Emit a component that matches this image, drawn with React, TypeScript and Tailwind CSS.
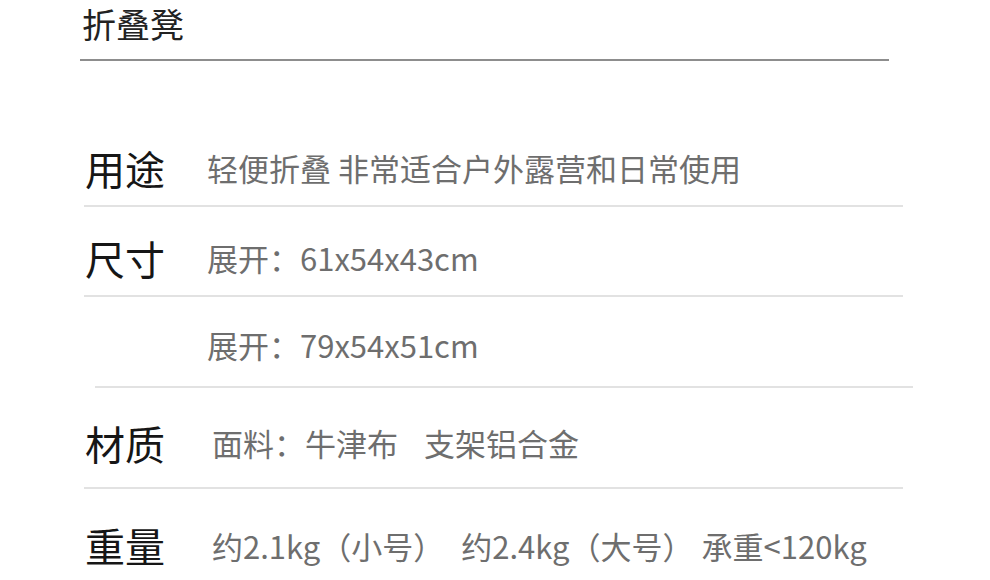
const font = "font-['Noto_Sans_CJK_SC','Noto_Sans',sans-serif]";

const Label = ({ text }: { text: string }) => (
  <span className="w-[123px] shrink-0 pl-px text-[40px] leading-none text-[#161616]">{text}</span>
);

export default function App() {
  return (
    <div className={`w-[990px] h-[580px] overflow-hidden bg-white ${font}`}>
      {/* title */}
      <div className="ml-[80px] w-[809px] h-[61px] border-b-2 border-[#8d8d8d] flex items-center pb-[11px] pl-[2px]">
        <span className="text-[34px] leading-none text-[#222]">折叠凳</span>
      </div>

      <div className="ml-[84px] w-[819px] pt-[56px]">
        {/* usage */}
        <div className="h-[90px] border-b-2 border-[#e2e2e2] flex items-center pt-[13px]">
          <Label text="用途" />
          <span className="text-[31px] leading-none text-[#6e6e6e]">轻便折叠 非常适合户外露营和日常使用</span>
        </div>

        {/* size */}
        <div className="h-[90px] border-b-2 border-[#e2e2e2] flex items-center pt-[13px]">
          <Label text="尺寸" />
          <span className="text-[31px] leading-none text-[#6e6e6e]">展开：61x54x43cm</span>
        </div>
        <div className="h-[91px] ml-[11px] -mr-[10px] border-b-2 border-[#e2e2e2] flex items-center pt-[6px]">
          <span className="w-[112px] shrink-0" />
          <span className="text-[31px] leading-none text-[#6e6e6e]">展开：79x54x51cm</span>
        </div>

        {/* material */}
        <div className="h-[101px] border-b-2 border-[#e2e2e2] flex items-center pt-[10px]">
          <Label text="材质" />
          <span className="ml-[5px] text-[31px] leading-none text-[#6e6e6e]">
            面料：牛津布<span className="ml-[26px]">支架铝合金</span>
          </span>
        </div>

        {/* weight */}
        <div className="h-[100px] flex items-center pt-[12px]">
          <Label text="重量" />
          <span className="ml-[5px] text-[31px] leading-none text-[#6e6e6e] whitespace-nowrap">
            约2.1kg（小号）
            <span className="ml-[17px]">约2.4kg（大号）</span>
            <span className="ml-[8px]">承重&lt;120kg</span>
          </span>
        </div>
      </div>
    </div>
  );
}
